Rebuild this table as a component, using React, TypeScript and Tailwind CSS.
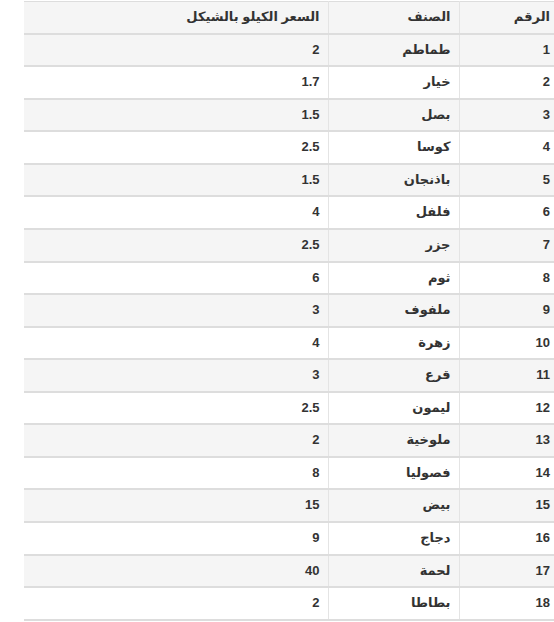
const rows: [number, string, string][] = [
  [1, "طماطم", "2"],
  [2, "خيار", "1.7"],
  [3, "بصل", "1.5"],
  [4, "كوسا", "2.5"],
  [5, "باذنجان", "1.5"],
  [6, "فلفل", "4"],
  [7, "جزر", "2.5"],
  [8, "ثوم", "6"],
  [9, "ملفوف", "3"],
  [10, "زهرة", "4"],
  [11, "قرع", "3"],
  [12, "ليمون", "2.5"],
  [13, "ملوخية", "2"],
  [14, "فصوليا", "8"],
  [15, "بيض", "15"],
  [16, "دجاج", "9"],
  [17, "لحمة", "40"],
  [18, "بطاطا", "2"],
];

export default function App() {
  return (
    <div className="w-[554px] h-[622px] overflow-hidden bg-white flex">
      {/* left edge of the page frame */}
      <div className="ml-px w-[2px] bg-[#e2e2e2]" />
      <div className="ml-[3px] w-px bg-[#f3f3f3]" />
      <div className="pl-[20px] pt-px">
        <table
          dir="rtl"
          className="w-[534px] border-collapse text-[13px] leading-[18.57px] font-bold text-[#333] font-['Liberation_Sans','DejaVu_Sans',sans-serif]"
        >
          <thead>
            <tr className="bg-[#f5f5f5] border-t border-b-2 border-[#dddddd]">
              <th className="w-[99px] px-2 py-[6px] text-right font-bold border-l border-[#e4e4e4]">الرقم</th>
              <th className="w-[131px] px-2 py-[6px] text-right font-bold border-l border-[#e4e4e4]">الصنف</th>
              <th className="px-2 py-[6px] text-right font-bold">السعر الكيلو بالشيكل</th>
            </tr>
          </thead>
          <tbody>
            {rows.map(([n, name, price]) => (
              <tr key={n} className={`border-b-2 border-[#dddddd] ${n % 2 === 1 ? "bg-[#f5f5f5]" : "bg-white"}`}>
                <td className="px-2 py-[6px] text-right border-l border-[#e4e4e4]">{n}</td>
                <td className="px-2 py-[6px] text-right border-l border-[#e4e4e4]">{name}</td>
                <td className="px-2 py-[6px] text-right">{price}</td>
              </tr>
            ))}
          </tbody>
        </table>
      </div>
    </div>
  );
}
